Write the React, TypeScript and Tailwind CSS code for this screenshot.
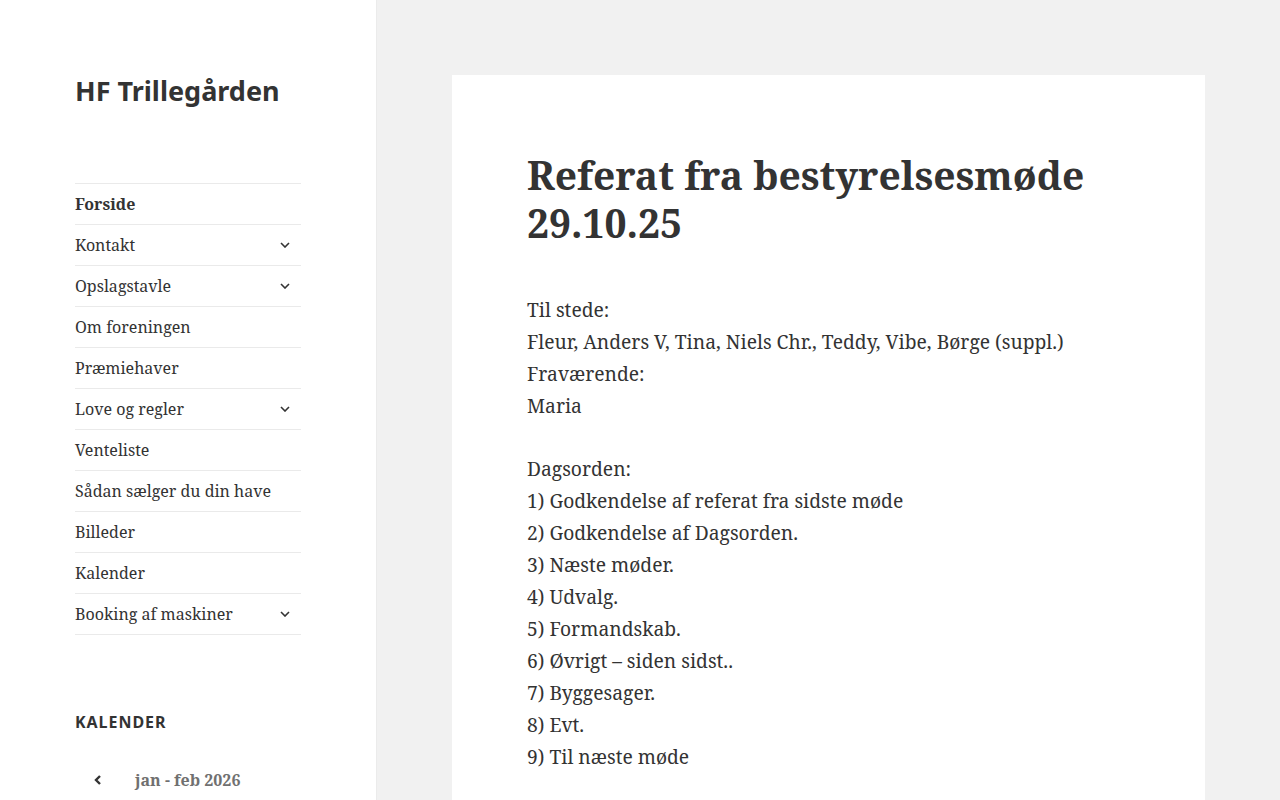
import React from "react";

const serif = { fontFamily: '"Noto Serif", "DejaVu Serif", serif' };
const sans = { fontFamily: '"Noto Sans", "Open Sans", sans-serif' };

type NavItem = { label: string; active?: boolean; sub?: boolean };

const navItems: NavItem[] = [
  { label: "Forside", active: true },
  { label: "Kontakt", sub: true },
  { label: "Opslagstavle", sub: true },
  { label: "Om foreningen" },
  { label: "Præmiehaver" },
  { label: "Love og regler", sub: true },
  { label: "Venteliste" },
  { label: "Sådan sælger du din have" },
  { label: "Billeder" },
  { label: "Kalender" },
  { label: "Booking af maskiner", sub: true },
];

const present = [
  "Til stede:",
  "Fleur, Anders V, Tina, Niels Chr., Teddy, Vibe, Børge (suppl.)",
  "Fraværende:",
  "Maria",
];

const agenda = [
  "Dagsorden:",
  "1) Godkendelse af referat fra sidste møde",
  "2) Godkendelse af Dagsorden.",
  "3) Næste møder.",
  "4) Udvalg.",
  "5) Formandskab.",
  "6) Øvrigt – siden sidst..",
  "7) Byggesager.",
  "8) Evt.",
  "9) Til næste møde",
];

const Chevron = () => (
  <svg width="10" height="6" viewBox="0 0 10 6" className="text-[#333]">
    <polyline points="1,1 5,5 9,1" fill="none" stroke="currentColor" strokeWidth="1.6" />
  </svg>
);

export default function App() {
  return (
    <div className="flex min-h-screen bg-[#f1f1f1] text-[#333]">
      <aside className="w-[376px] shrink-0 bg-white shadow-[0_0_1px_rgba(0,0,0,0.15)] px-[75px] pt-[72px] min-h-screen">
        <h1 className="text-[27px] font-bold leading-[38px]" style={sans}>
          HF Trillegården
        </h1>

        <nav className="mt-[73px] border-t border-[#eaeaea]" style={serif}>
          {navItems.map((item) => (
            <div
              key={item.label}
              className="flex items-center justify-between h-[41px] border-b border-[#eaeaea]"
            >
              <span className={`text-[16px] ${item.active ? "font-bold" : ""}`}>{item.label}</span>
              {item.sub && (
                <span className="w-[30px] flex justify-center mr-[1px]">
                  <Chevron />
                </span>
              )}
            </div>
          ))}
        </nav>

        <h2
          className="mt-[75px] text-[16px] font-bold uppercase tracking-[0.06em] leading-[24px]"
          style={sans}
        >
          Kalender
        </h2>

        <div className="mt-[34px] flex items-center text-[#707070]" style={serif}>
          <span className="w-[60px] flex justify-start pl-[19px]">
            <svg width="8" height="12" viewBox="0 0 8 12">
              <polyline points="6,2 2,6 6,10" fill="none" stroke="#333" strokeWidth="2.4" />
            </svg>
          </span>
          <span className="text-[16px] font-bold">jan - feb 2026</span>
        </div>
      </aside>

      <main className="flex-1 pl-[76px] pr-[75px] pt-[75px]">
        <article className="bg-white px-[75px] pt-[76px] pb-[40px] min-h-[725px]" style={serif}>
          <h1 className="text-[39px] font-bold leading-[48px]">
            Referat fra bestyrelsesmøde 29.10.25
          </h1>
          <div className="mt-[47px] text-[19.25px] leading-[32px]">
            <p className="mb-[31px]">
              {present.map((l) => (
                <span key={l} className="block">
                  {l}
                </span>
              ))}
            </p>
            <p>
              {agenda.map((l) => (
                <span key={l} className="block">
                  {l}
                </span>
              ))}
            </p>
          </div>
        </article>
      </main>
    </div>
  );
}
